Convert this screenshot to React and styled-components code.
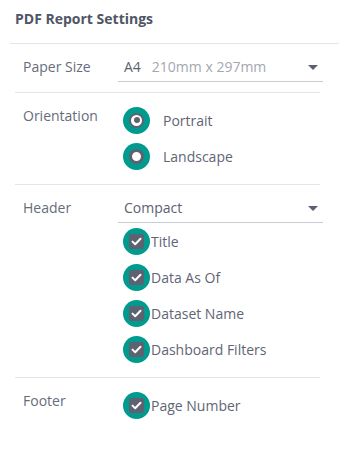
import React from "react";
import styled, { createGlobalStyle } from "styled-components";

const Global = createGlobalStyle`
  html, body { margin: 0; padding: 0; background: #ffffff; }
  body { font-family: "Open Sans", "Liberation Sans", sans-serif; }
`;

const Panel = styled.div`
  width: 339px;
  height: 449px;
  background: #fff;
  box-sizing: border-box;
`;

const Title = styled.h2`
  margin: 0;
  padding: 9px 15px 14px;
  font-size: 14px;
  line-height: 20px;
  font-weight: 700;
  color: #4f5666;
`;

const Divider = styled.div`
  height: 1px;
  background: #e4e5e7;
  margin: ${(p) => (p.$top ? "0 0 0 10px" : "0 19px 0 15px")};
`;

const Section = styled.div`
  display: grid;
  grid-template-columns: 95px 1fr;
  align-items: start;
  padding: 9px 16px 10px 23px;
`;

const Label = styled.div`
  padding-top: 4px;
  font-size: 14px;
  line-height: 20px;
  color: #666d7a;
`;

const Controls = styled.div`
  display: flex;
  flex-direction: column;
`;

const Select = styled.div`
  display: flex;
  align-items: center;
  margin-top: 4px;
  padding: 0 5px 4px 6px;
  border-bottom: 1px solid #c9ccd2;
  font-size: 14px;
  line-height: 20px;
  color: #5b6170;
`;

const Value = styled.span`
  flex: 1;
`;

const Hint = styled.span`
  color: #a3a7ae;
  margin-left: 11px;
`;

const Arrow = styled.span`
  width: 0;
  height: 0;
  border-left: 5px solid transparent;
  border-right: 5px solid transparent;
  border-top: 5px solid #5b6170;
`;

const Option = styled.label`
  display: flex;
  align-items: center;
  height: 36px;
  font-size: 14px;
  color: #5f6574;
  cursor: pointer;
`;

const Halo = styled.span`
  width: 27px;
  height: 27px;
  border-radius: 50%;
  background: #009a8e;
  display: flex;
  align-items: center;
  justify-content: center;
  margin-left: 5px;
  flex-shrink: 0;
`;

const RadioRing = styled.span`
  width: 15px;
  height: 15px;
  box-sizing: border-box;
  border-radius: 50%;
  border: ${(p) => (p.$checked ? "2.5px" : "3px")} solid #5d6271;
  background: #fff;
  display: flex;
  align-items: center;
  justify-content: center;
`;

const Dot = styled.span`
  width: 6px;
  height: 6px;
  border-radius: 50%;
  background: #5d6271;
`;

const RadioText = styled.span`
  margin-left: 13px;
`;

const Box = styled.span`
  width: 15px;
  height: 15px;
  border-radius: 2px;
  background: #5d6271;
  display: flex;
  align-items: center;
  justify-content: center;
`;

const CheckText = styled.span`
  margin-left: 1px;
`;

const Radio = ({ checked, children }) => (
  <Option>
    <Halo>
      <RadioRing $checked={checked}>{checked && <Dot />}</RadioRing>
    </Halo>
    <RadioText>{children}</RadioText>
  </Option>
);

const Check = ({ children }) => (
  <Option>
    <Halo>
      <Box>
        <svg width="11" height="9" viewBox="0 0 11 9">
          <path d="M1.5 4.6 L4.2 7.2 L9.5 1.8" fill="none" stroke="#fff" strokeWidth="2" strokeLinecap="round" strokeLinejoin="round" />
        </svg>
      </Box>
    </Halo>
    <CheckText>{children}</CheckText>
  </Option>
);

export default function App() {
  return (
    <Panel>
      <Global />
      <Title>PDF Report Settings</Title>
      <Divider $top />
      <Section>
        <Label>Paper Size</Label>
        <Select>
          <Value>
            A4<Hint>210mm x 297mm</Hint>
          </Value>
          <Arrow />
        </Select>
      </Section>
      <Divider />
      <Section>
        <Label>Orientation</Label>
        <Controls>
          <Radio checked>Portrait</Radio>
          <Radio>Landscape</Radio>
        </Controls>
      </Section>
      <Divider />
      <Section>
        <Label>Header</Label>
        <Controls>
          <Select>
            <Value>Compact</Value>
            <Arrow />
          </Select>
          <Check>Title</Check>
          <Check>Data As Of</Check>
          <Check>Dataset Name</Check>
          <Check>Dashboard Filters</Check>
        </Controls>
      </Section>
      <Divider />
      <Section>
        <Label>Footer</Label>
        <Controls>
          <Check>Page Number</Check>
        </Controls>
      </Section>
    </Panel>
  );
}
